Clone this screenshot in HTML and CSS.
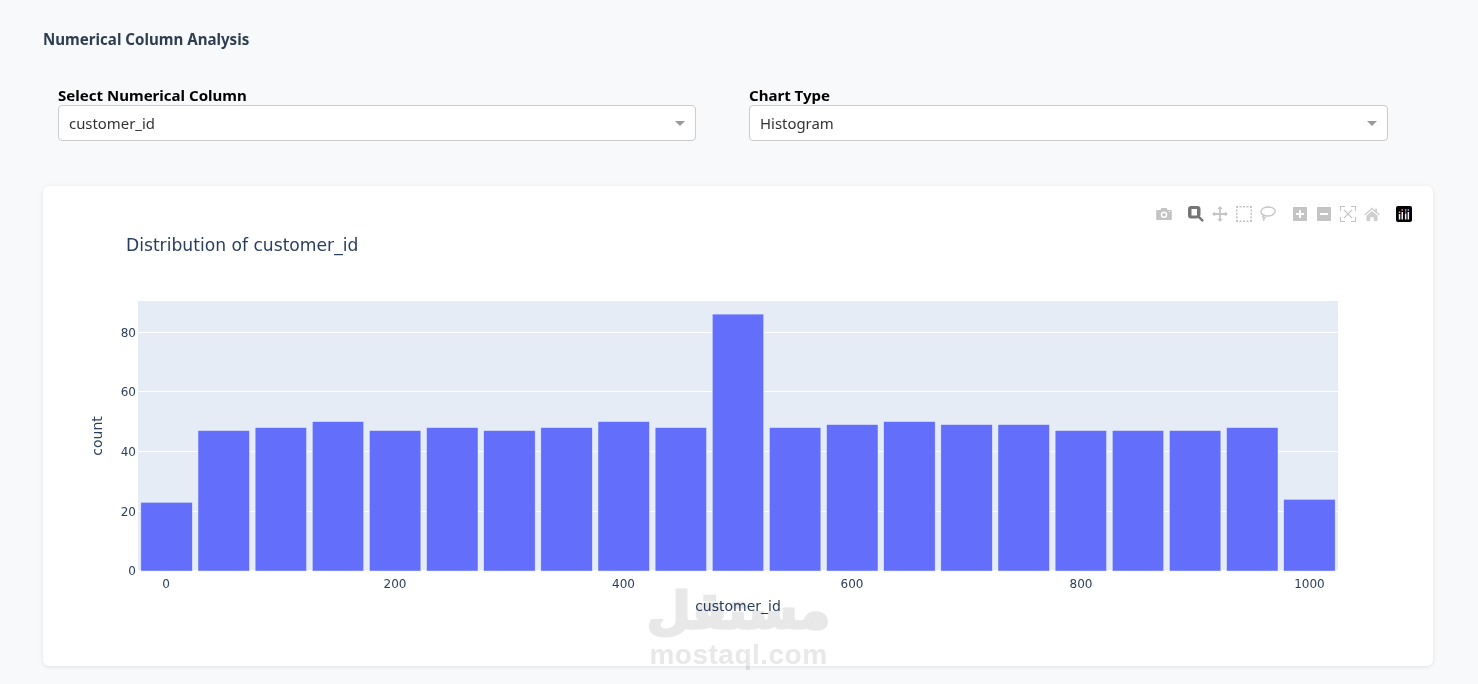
FILE: index.html
```html
<!DOCTYPE html>
<html lang="en">
<head>
<meta charset="utf-8">
<title>Numerical Column Analysis</title>
<link rel="stylesheet" href="styles.css">
</head>
<body>
<main class="page">
  <h3 class="section-title">Numerical Column Analysis</h3>
  <section class="controls">
    <div class="control">
      <label class="control-label">Select Numerical Column</label>
      <div class="select"><span class="select-value">customer_id</span><span class="caret"></span></div>
    </div>
    <div class="control">
      <label class="control-label">Chart Type</label>
      <div class="select"><span class="select-value">Histogram</span><span class="caret"></span></div>
    </div>
  </section>
  <section class="card">
    <div class="modebar">
      <div class="mode-group">
        <span class="mode-btn"><svg viewBox="0 0 16 16" class="ico"><path fill-rule="evenodd" d="M1 4h3.400l1-2h5.200l1 2H15a.8.8 0 0 1 .8.8v8.400a.8.8 0 0 1-.8.8H1a.8.8 0 0 1-.8-.8V4.800A.8.8 0 0 1 1 4zM8 5.500a3.300 3.300 0 1 0 0 6.600 3.300 3.300 0 0 0 0-6.600zM8 7a1.800 1.800 0 1 1 0 3.600A1.800 1.800 0 0 1 8 7zM12.800 5h1.400v1h-1.400z"/></svg></span>
      </div>
      <div class="mode-group">
        <span class="mode-btn"><svg viewBox="0 0 16 16" class="ico ico-active"><path fill-rule="evenodd" d="M3 0h6.500A3 3 0 0 1 12.500 3v5.500c0 .7-.2 1.300-.6 1.800l4 3.900-1.700 1.800-4.100-4c-.5.300-1 .5-1.600.5H3a3 3 0 0 1-3-3V3a3 3 0 0 1 3-3zM3.500 3v6.500h5.500V3z"/></svg></span>
        <span class="mode-btn"><svg viewBox="0 0 16 16" class="ico"><path d="M8 0l2.600 2.900H8.900v4.200h4.200V5.400L16 8l-2.900 2.600V8.900H8.900v4.200h1.700L8 16l-2.600-2.900h1.700V8.900H2.900v1.700L0 8l2.900-2.600v1.700h4.200V2.900H5.400z"/></svg></span>
        <span class="mode-btn"><svg viewBox="0 0 16 16" class="ico"><path d="M0 0h2v2H0zM3.500 0h2v1.500h-2zM7 0h2v1.500H7zM10.500 0h2v1.500h-2zM14 0h2v2h-2zM0 3.500h1.500v2H0zM0 7h1.500v2H0zM0 10.500h1.500v2H0zM14.500 3.500H16v2h-1.500zM14.500 7H16v2h-1.500zM14.500 10.500H16v2h-1.500zM0 14h2v2H0zM3.500 14.500h2V16h-2zM7 14.500h2V16H7zM10.500 14.500h2V16h-2zM14 14h2v2h-2z"/></svg></span>
        <span class="mode-btn"><svg viewBox="0 0 16 16" class="ico ico-line"><path d="M8.500 1c3.800 0 6.700 1.800 6.700 4.300 0 2.700-3.300 4.700-7.200 4.700-1.200 0-2.300-.1-3.300-.5C2.800 9 .9 7.500.9 5.500.9 3 4.500 1 8.500 1zM4.400 9.500c-1.600.2-2 2-.9 2.600 1 .6 2.100-.3 1.700-1.500M3.600 11.800c.3 1.200.3 2.200 0 3.200"/></svg></span>
      </div>
      <div class="mode-group">
        <span class="mode-btn"><svg viewBox="0 0 16 16" class="ico"><path fill-rule="evenodd" d="M1.500 1h13a.5.500 0 0 1 .5.500v13a.5.500 0 0 1-.5.500h-13a.5.500 0 0 1-.5-.5v-13a.5.500 0 0 1 .5-.5zM7 4v3H4v2h3v3h2V9h3V7H9V4z"/></svg></span>
        <span class="mode-btn"><svg viewBox="0 0 16 16" class="ico"><path fill-rule="evenodd" d="M1.500 1h13a.5.500 0 0 1 .5.500v13a.5.500 0 0 1-.5.500h-13a.5.500 0 0 1-.5-.5v-13a.5.500 0 0 1 .5-.5zM4 7v2h8V7z"/></svg></span>
        <span class="mode-btn"><svg viewBox="0 0 16 16" class="ico"><path d="M0 0h5v1H1v4H0zM11 0h5v5h-1V1h-4zM0 11h1v4h4v1H0zM15 11h1v5h-5v-1h4zM4.300 3.500L8 7.200l3.700-3.700.8.8L8.800 8l3.700 3.700-.8.8L8 8.800l-3.700 3.700-.8-.8L7.200 8 3.500 4.300z"/></svg></span>
        <span class="mode-btn"><svg viewBox="0 0 16 16" class="ico ico-home"><path d="M8 1.500l3 2.700V2.800h2v3.200l2.800 2.600-.9.900L8 3.500 1.100 9.500l-.9-.9zM8 5l5.500 4.800V15H9.700v-3.700H6.300V15H2.500V9.800z"/></svg></span>
      </div>
      <div class="mode-group">
        <span class="mode-btn"><svg viewBox="0 0 16 16" class="logo"><rect width="16" height="16" rx="2" fill="#000"/><path class="logo-bars" d="M2.800 8h1.500v5.500H2.800zM5.500 6h1.500v7.500H5.500zM8.900 7.500h1.500v6H8.900zM11.600 6h1.500v7.500h-1.500z"/><path class="logo-dots-a" d="M2.800 5.400h1.500v1.500H2.800zM5.500 3.200h1.500v1.500H5.500z"/><path class="logo-dots-b" d="M8.900 3.200h1.500v1.500H8.900zM8.900 5.400h1.500v1.200H8.900zM11.600 3.200h1.500v1.500h-1.500z"/></svg></span>
      </div>
    </div>
    <svg class="chart" viewBox="0 0 1390 480" role="img">
      <rect class="plot-bg" x="95" y="115" width="1200" height="270"/>
      <g class="grid">
        <line x1="95" x2="1295" y1="325.500" y2="325.500"/>
        <line x1="95" x2="1295" y1="265.500" y2="265.500"/>
        <line x1="95" x2="1295" y1="205.500" y2="205.500"/>
        <line x1="95" x2="1295" y1="146.500" y2="146.500"/>
        <line class="zero" x1="95" x2="1295" y1="385" y2="385"/>
      </g>
      <g class="bars">
        <rect x="97.860" y="316.300" width="51.430" height="68.700"/>
        <rect x="155" y="244.600" width="51.430" height="140.400"/>
        <rect x="212.140" y="241.600" width="51.430" height="143.400"/>
        <rect x="269.290" y="235.600" width="51.430" height="149.400"/>
        <rect x="326.430" y="244.600" width="51.430" height="140.400"/>
        <rect x="383.570" y="241.600" width="51.430" height="143.400"/>
        <rect x="440.710" y="244.600" width="51.430" height="140.400"/>
        <rect x="497.860" y="241.600" width="51.430" height="143.400"/>
        <rect x="555" y="235.600" width="51.430" height="149.400"/>
        <rect x="612.140" y="241.600" width="51.430" height="143.400"/>
        <rect x="669.290" y="128.100" width="51.430" height="256.900"/>
        <rect x="726.430" y="241.600" width="51.430" height="143.400"/>
        <rect x="783.570" y="238.600" width="51.430" height="146.400"/>
        <rect x="840.710" y="235.600" width="51.430" height="149.400"/>
        <rect x="897.860" y="238.600" width="51.430" height="146.400"/>
        <rect x="955" y="238.600" width="51.430" height="146.400"/>
        <rect x="1012.140" y="244.600" width="51.430" height="140.400"/>
        <rect x="1069.290" y="244.600" width="51.430" height="140.400"/>
        <rect x="1126.430" y="244.600" width="51.430" height="140.400"/>
        <rect x="1183.570" y="241.600" width="51.430" height="143.400"/>
        <rect x="1240.710" y="313.300" width="51.430" height="71.700"/>
      </g>
      <g class="ticks ticks-y">
        <text x="93" y="389">0</text>
        <text x="93" y="329.500">20</text>
        <text x="93" y="270">40</text>
        <text x="93" y="210">60</text>
        <text x="93" y="150.500">80</text>
      </g>
      <g class="ticks ticks-x">
        <text x="123" y="402">0</text>
        <text x="352" y="402">200</text>
        <text x="580.500" y="402">400</text>
        <text x="809" y="402">600</text>
        <text x="1038" y="402">800</text>
        <text x="1266.500" y="402">1000</text>
      </g>
      <text class="chart-title" x="83" y="65">Distribution of customer_id</text>
      <text class="axis-title" x="695" y="425">customer_id</text>
      <text class="axis-title" transform="translate(59 250) rotate(-90)">count</text>
    </svg>
    <div class="watermark" aria-hidden="true">
      <span class="wm-ar">مستقل</span>
      <span class="wm-en">mostaql.com</span>
    </div>
  </section>
</main>
</body>
</html>
```
FILE: styles.css
```css
* { box-sizing: border-box; }
html, body { margin: 0; height: 100%; }
body {
  background: #f8f9fa;
  font-family: "Noto Sans", "Open Sans", sans-serif;
  overflow: hidden;
}
.page {
  display: flex;
  flex-direction: column;
  padding: 29px 45px 18px 43px;
}
.section-title {
  margin: 0;
  font-size: 15.100px;
  line-height: 20px;
  font-weight: 700;
  color: #2c3e50;
}
.controls {
  display: grid;
  grid-template-columns: 638px 639px;
  column-gap: 53px;
  margin: 37px 0 0 15px;
}
.control { display: flex; flex-direction: column; }
.control-label {
  font-size: 15.050px;
  line-height: 19px;
  font-weight: 700;
  color: #000;
}
.select {
  display: flex;
  align-items: center;
  justify-content: space-between;
  height: 36px;
  padding: 0 10px;
  background: #fff;
  border: 1px solid #ccc;
  border-radius: 4px;
  font-size: 14.900px;
  color: #333;
}
.caret {
  width: 0;
  height: 0;
  border-left: 5px solid transparent;
  border-right: 5px solid transparent;
  border-top: 5px solid #999;
}
.card {
  position: relative;
  height: 480px;
  margin-top: 45px;
  background: #fff;
  border-radius: 6px;
  box-shadow: 0 1px 4px rgba(0, 0, 0, 0.1);
}
.chart { display: block; width: 1390px; height: 480px; }
.plot-bg { fill: #e5ecf6; }
.grid line { stroke: #fff; stroke-width: 1; }
.grid .zero { stroke-width: 2; }
.bars rect { fill: #636efa; stroke: #e5ecf6; stroke-width: 0.5; }
.ticks text {
  font-family: "DejaVu Sans", Verdana, sans-serif;
  font-size: 12px;
  fill: #2a3f5f;
}
.ticks-y text { text-anchor: end; }
.ticks-x text { text-anchor: middle; }
.chart-title {
  font-family: "DejaVu Sans", Verdana, sans-serif;
  font-size: 17.150px;
  fill: #2a3f5f;
}
.axis-title {
  font-family: "DejaVu Sans", Verdana, sans-serif;
  font-size: 14px;
  fill: #2a3f5f;
  text-anchor: middle;
}
.modebar {
  position: absolute;
  top: 16px;
  right: 17px;
  display: flex;
  gap: 8px;
}
.mode-group { display: flex; }
.mode-btn {
  display: flex;
  align-items: center;
  justify-content: center;
  width: 24px;
  height: 24px;
}
.ico { width: 16px; height: 16px; fill: #c4c4c4; }
.ico-active { fill: #757575; }
.ico-home { fill: #cfcfcf; }
.ico-line { fill: none; stroke: #c4c4c4; stroke-width: 1.300; }
.logo { width: 16px; height: 16px; }
.logo-bars { fill: #f2f2ff; }
.logo-dots-a { fill: #ef9bb0; }
.logo-dots-b { fill: #a9b0ff; }
.watermark {
  position: absolute;
  left: 607px;
  top: 397px;
  width: 177px;
  display: flex;
  flex-direction: column;
  align-items: center;
  color: #e8e8e8;
  font-weight: 700;
  mix-blend-mode: multiply;
  pointer-events: none;
}
.wm-ar {
  font-family: "DejaVu Sans", sans-serif;
  font-size: 50px;
  line-height: 57px;
  white-space: nowrap;
  -webkit-text-stroke: 3px #e8e8e8;
}
.wm-en {
  font-family: "Liberation Sans", Arial, sans-serif;
  font-size: 28px;
  line-height: 30px;
  letter-spacing: 0.5px;
  white-space: nowrap;
}
```
